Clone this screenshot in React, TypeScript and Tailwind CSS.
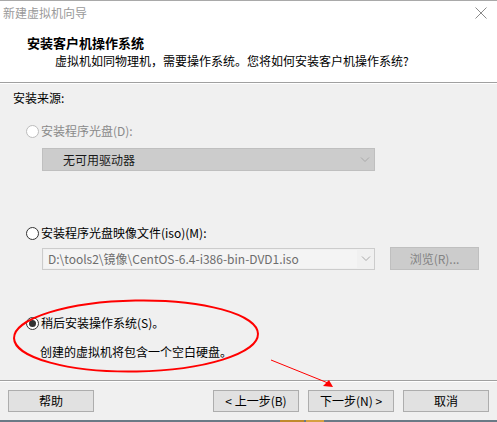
import React from "react"

const font = "font-['Microsoft_YaHei','Noto_Sans_CJK_SC',sans-serif]"

const Chevron = () => (
  <svg width="10" height="6" viewBox="0 0 10 6" className="block">
    <path d="M1 0.5 L5 4.5 L9 0.5" fill="none" stroke="#a8a8a8" strokeWidth="1" />
  </svg>
)

const Radio = ({ disabled, checked }: { disabled?: boolean; checked?: boolean }) => (
  <span
    className={`w-[13px] h-[13px] rounded-full border bg-white flex items-center justify-center shrink-0 ${
      disabled ? "border-[#bcbcbc]" : "border-[#333333]"
    }`}
  >
    {checked && <span className="w-[7px] h-[7px] rounded-full bg-[#333333]" />}
  </span>
)

const Button = ({ children }: { children: React.ReactNode }) => (
  <div className="w-[86px] h-[22px] bg-[#e1e1e1] border border-[#adadad] flex items-center justify-center leading-[16px] text-black">
    {children}
  </div>
)

export default function App() {
  return (
    <div className={`w-[497px] h-[422px] relative overflow-hidden bg-[#f0f0f0] text-[12px] ${font}`}>
      {/* header */}
      <div className="bg-white h-[82px] border-t border-[#a9a9a9] flex flex-col">
        <div className="h-[24px] flex items-center justify-between pl-[3px] pr-[10px]">
          <span className="text-[#9a9a9a] leading-[16px]">新建虚拟机向导</span>
          <svg width="12" height="12" viewBox="0 0 12 12">
            <path d="M0.5 0.5 L11.5 11.5 M11.5 0.5 L0.5 11.5" stroke="#8a8a8a" strokeWidth="1" />
          </svg>
        </div>
        <div className="pl-[27px] mt-[10px] font-bold text-[13px] leading-[16px] text-black">安装客户机操作系统</div>
        <div className="pl-[55px] mt-[1px] leading-[18px] text-black">
          虚拟机如同物理机，需要操作系统。您将如何安装客户机操作系统?
        </div>
      </div>
      <div className="h-px bg-[#a0a0a0]" />
      <div className="h-px bg-white" />

      {/* body */}
      <div className="flex flex-col pl-[13px]">
        <div className="mt-[6px] leading-[16px] h-[16px] text-black">安装来源:</div>

        <div className="mt-[17px] pl-[13px] h-[16px] flex items-center gap-[2px] text-[#8a8a8a] leading-[16px]">
          <Radio disabled />
          <span>安装程序光盘(D):</span>
        </div>
        <div className="mt-[9px] ml-[29px] w-[333px] h-[23px] bg-[#cccccc] border border-[#bfbfbf] flex items-center justify-between pl-[20px] pr-[4px] leading-[16px] text-[#1a1a1a]">
          <span>无可用驱动器</span>
          <Chevron />
        </div>

        <div className="mt-[54px] pl-[13px] h-[16px] flex items-center gap-[2px] text-black leading-[16px]">
          <Radio />
          <span>安装程序光盘映像文件(iso)(M):</span>
        </div>
        <div className="mt-[6px] ml-[29px] h-[23px] flex items-center">
          <div className="w-[333px] h-[22px] bg-[#f0f0f0] border border-[#cccccc] flex items-center">
            <div className="w-[313px] h-[18px] ml-[1px] bg-[#f4f4f4] flex items-center pl-[4px] text-[#6d6d6d] leading-[16px]">
              D:\tools2\镜像\CentOS-6.4-i386-bin-DVD1.iso
            </div>
            <div className="flex-1 flex items-center justify-center">
              <Chevron />
            </div>
          </div>
          <div className="ml-[15px] w-[89px] h-[23px] bg-[#cccccc] border border-[#bfbfbf] flex items-center justify-center text-[#838383] leading-[16px]">
            浏览(R)...
          </div>
        </div>

        <div className="mt-[45px] pl-[13px] h-[16px] flex items-center gap-[2px] text-black leading-[16px]">
          <Radio checked />
          <span>稍后安装操作系统(S)。</span>
        </div>
        <div className="mt-[13px] pl-[27px] h-[16px] leading-[16px] text-black">创建的虚拟机将包含一个空白硬盘。</div>
      </div>

      {/* footer */}
      <div className="absolute left-0 right-0 top-[380px] flex flex-col">
        <div className="h-px bg-[#a0a0a0]" />
        <div className="h-px bg-white" />
        <div className="mt-[8px] flex items-center justify-between px-[8px]">
          <Button>帮助</Button>
          <div className="flex gap-[9px]">
            <Button>&lt; 上一步(B)</Button>
            <Button>下一步(N) &gt;</Button>
            <Button>取消</Button>
          </div>
        </div>
      </div>
      <div className="absolute left-0 right-0 bottom-0 h-[2px] bg-[#6a7a86] flex">
        <div className="ml-[280px] w-[24px] bg-[#c08a2c]" />
        <div className="ml-[2px] w-[18px] bg-[#d6a040]" />
      </div>

      {/* red annotation */}
      <svg className="absolute left-0 top-0 pointer-events-none" width="497" height="422">
        <ellipse cx="136" cy="336" rx="122" ry="35.5" fill="none" stroke="#ff0000" strokeWidth="2" transform="rotate(-1 136 336)" />
        <line x1="271" y1="360" x2="328" y2="383" stroke="#ff0000" strokeWidth="1" />
        <polygon points="323,386 333,387 329,380" fill="#ff0000" />
      </svg>
    </div>
  )
}
